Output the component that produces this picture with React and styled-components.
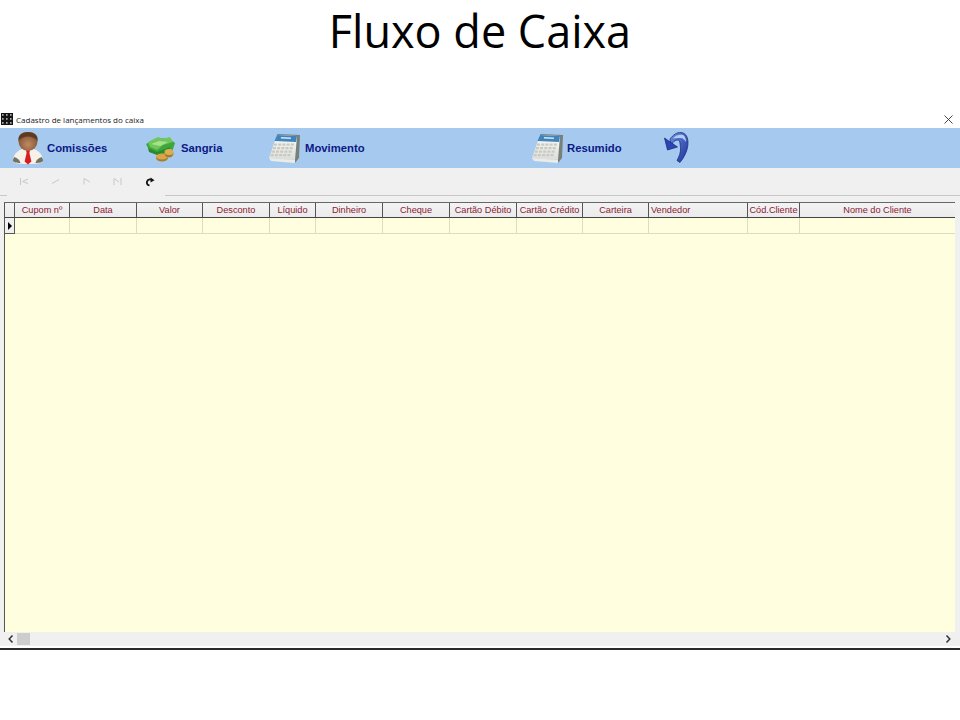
import React from 'react';
import styled, { createGlobalStyle } from 'styled-components';

const GlobalStyle = createGlobalStyle`
  html, body { margin: 0; padding: 0; background: #fff; }
  body { font-family: "Liberation Sans", Arial, sans-serif; }
`;

const Page = styled.div`
  width: 960px;
  height: 720px;
  background: #fff;
  overflow: hidden;
`;
const Heading = styled.h1`
  margin: 0;
  height: 110px;
  padding-top: 1px;
  box-sizing: border-box;
  text-align: center;
  font-family: "Open Sans", sans-serif;
  font-weight: 400;
  font-size: 45px;
  line-height: 60px;
  color: #000;
`;
const Win = styled.div`
  height: 540px;
  display: flex;
  flex-direction: column;
  border-bottom: 2px solid #2b2b2b;
  box-sizing: border-box;
`;
const TitleBar = styled.div`
  height: 18px;
  display: flex;
  align-items: center;
  padding: 0 7px 0 1px;
  background: #fff;
`;
const TitleText = styled.span`
  margin-left: 3px;
  font-family: "Open Sans", sans-serif;
  font-size: 8px;
  color: #222;
  flex: 1;
`;
const Ribbon = styled.div`
  height: 40px;
  background: #a6c9ef;
  display: flex;
  align-items: center;
  flex-shrink: 0;
`;
const RibbonButton = styled.div`
  width: ${p => p.$w}px;
  display: flex;
  align-items: center;
  gap: ${p => p.$gap || 2}px;
  padding-left: ${p => p.$pad || 0}px;
  box-sizing: border-box;
  font-size: 11.3px;
  font-weight: 700;
  color: #0d1a85;
`;
const NavBar = styled.div`
  height: 28px;
  background: #f0f0f0;
  border-bottom: 1px solid;
  border-image: linear-gradient(to right, #c8c8c8 8px, #f0f0f0 8px, #f0f0f0 166px, #c8c8c8 166px) 1;
  box-sizing: border-box;
  display: flex;
  align-items: center;
  padding-left: 8px;
  flex-shrink: 0;
`;
const NavButton = styled.div`
  width: 31.5px;
  height: 16px;
  display: flex;
  align-items: center;
  justify-content: center;
  color: ${p => (p.$on ? '#111' : '#c8c8c8')};
`;
const GridArea = styled.div`
  flex: 1;
  background: #f0f0f0;
  padding: 6px 5px 0 4px;
  display: flex;
  flex-direction: column;
  min-height: 0;
`;
const Sheet = styled.div`
  flex: 1;
  background: #ffffe0;
  border-left: 1px solid #555;
  border-top: 1px solid #666;
  min-height: 0;
`;
const Row = styled.div`
  display: grid;
  grid-template-columns: 10px 55px 67px 66px 67px 46px 67px 67px 67px 66px 66px 99px 52px 1fr;
  height: ${p => p.$h}px;
  box-sizing: border-box;
`;
const HeadCell = styled.div`
  background: linear-gradient(#f3f3f3, #ebebeb);
  border-right: 1px solid #555;
  border-bottom: 1px solid #444;
  color: #8b2035;
  font-size: 9.2px;
  line-height: 14px;
  text-align: ${p => (p.$left ? 'left' : 'center')};
  padding-left: ${p => (p.$left ? '2px' : '0')};
  white-space: nowrap;
  overflow: hidden;
  &:last-child { border-right: none; }
`;
const BodyCell = styled.div`
  border-right: 1px solid #dcdcc0;
  border-bottom: 1px solid #dcdcc0;
  &:last-child { border-right: none; }
`;
const Indicator = styled.div`
  background: #f0f0f0;
  border-right: 1px solid #555;
  border-bottom: 1px solid #555;
  display: flex;
  align-items: center;
  justify-content: center;
`;
const Arrow = styled.span`
  width: 0;
  height: 0;
  border-left: 4px solid #000;
  border-top: 4px solid transparent;
  border-bottom: 4px solid transparent;
`;
const ScrollBar = styled.div`
  height: 14px;
  margin-bottom: 2px;
  background: #f0f0f0;
  display: flex;
  align-items: center;
  justify-content: space-between;
  padding: 0 9px 0 8px;
  flex-shrink: 0;
`;
const Thumb = styled.div`
  width: 13px;
  height: 12px;
  margin-left: 3px;
  background: #cdcdcd;
`;
const ScrollLeft = styled.div`
  display: flex;
  align-items: center;
`;

const columns = [
  { label: 'Cupom nº' },
  { label: 'Data' },
  { label: 'Valor' },
  { label: 'Desconto' },
  { label: 'Líquido' },
  { label: 'Dinheiro' },
  { label: 'Cheque' },
  { label: 'Cartão Débito' },
  { label: 'Cartão Crédito' },
  { label: 'Carteira' },
  { label: 'Vendedor', left: true },
  { label: 'Cód.Cliente' },
  { label: 'Nome do Cliente' },
];

function AppIcon() {
  return (
    <svg width="12" height="12" viewBox="0 0 12 12">
      <rect width="12" height="12" fill="#151515" />
      {[1, 5, 9].map(x => [1, 5, 9].map(y => (
        <rect key={x + '-' + y} x={x} y={y} width="1.6" height="1.8" fill="#a8a8a8" />
      )))}
    </svg>
  );
}

function PersonIcon() {
  return (
    <svg width="32" height="34" viewBox="0 0 32 34">
      <defs>
        <radialGradient id="face" cx="0.5" cy="0.65" r="0.6">
          <stop offset="0" stopColor="#c08a63" />
          <stop offset="1" stopColor="#7d5233" />
        </radialGradient>
      </defs>
      <path d="M1 30c0-6 4-10 9-12h12c5 2 9 6 9 12 0 2-4 3-15 3S1 32 1 30z" fill="#f6f2ea" />
      <path d="M1 30c0-2 .5-3 1.5-4 2 1 5 2 6 6-4 0-7.500-1-7.500-2zM31 30c0-2-.5-3-1.500-4-2 1-5 2-6 6 4 0 7.500-1 7.500-2z" fill="#77725f" />
      <ellipse cx="16" cy="10.500" rx="9.500" ry="9.500" fill="url(#face)" />
      <path d="M6.500 10C5.500 4 10 1 16 1s10.500 3 9.500 9c-2-3-6-4.500-9.500-4.500S8.500 7 6.500 10z" fill="#5f3a20" />
      <path d="M14 19.500h4l-.6 2.500 2 8.500-3.400 3-3.400-3 2-8.500z" fill="#d81f1f" />
    </svg>
  );
}

function MoneyIcon() {
  return (
    <svg width="32" height="28" viewBox="0 0 32 28">
      <path d="M1 10 12 4l13 1 5 4-3 9-13 3-9-3z" fill="#3ea63a" />
      <path d="M3 8l10-5 5 2 7-2 3 5-10 3-6 5-7-3z" fill="#6fc65a" />
      <path d="M6 10l8-3 9 1-8 4z" fill="#a8e08c" />
      <path d="M3 14l9 4 13-5-2 5-11 3-8-3z" fill="#2b8a30" />
      <ellipse cx="17" cy="24" rx="6" ry="3.400" fill="#a87c2a" />
      <ellipse cx="17" cy="22.500" rx="6" ry="3" fill="#d8a548" />
      <ellipse cx="24" cy="19.500" rx="4.500" ry="4" fill="#a87c2a" />
      <ellipse cx="24" cy="18" rx="4.500" ry="3" fill="#dcae54" />
    </svg>
  );
}

function CalendarIcon({ id }) {
  return (
    <svg width="33" height="31" viewBox="0 0 33 31">
      <defs>
        <linearGradient id={id} x1="0" y1="0" x2="0" y2="1">
          <stop offset="0" stopColor="#fafaf8" />
          <stop offset="1" stopColor="#dcddd8" />
        </linearGradient>
      </defs>
      <path d="M9 1 32 2 31 25 27 30z" fill="#77807a" />
      <path d="M9 2 29 3 27 27 1 25z" fill={`url(#${id})`} />
      <path d="M9 2 29 3 28 9 6.500 8z" fill="#4183bd" />
      <path d="M13 4 23 4.500 22.800 6 12.800 5.600z" fill="#d6e7f4" />
      {[0, 1, 2, 3].map(r => [0, 1, 2, 3, 4].map(c => (
        <rect key={r + '-' + c} x={6 - r * 1.1 + c * 4.2} y={10.500 + r * 3.500} width="3" height="2.200" fill="#c8c9c2" />
      )))}
      <path d="M1 25 27 27 27 30 3 28z" fill="#ecece6" />
    </svg>
  );
}

function BackIcon() {
  return (
    <svg width="26" height="32" viewBox="0 0 26 32">
      <defs>
        <linearGradient id="back" x1="0" y1="0" x2="1" y2="1">
          <stop offset="0" stopColor="#6d92de" />
          <stop offset="1" stopColor="#1b2f9a" />
        </linearGradient>
      </defs>
      <path d="M6 7C9 3 13 0 17 .5c5 .5 7 5 7 10 0 8-4 15-8 20l-3-2c2-4 4-8 3.500-13C16 10 15.500 8 14 8c-2 0-4 1-5 2.500-.8 1-1.500 2-2 3.500z" fill="url(#back)" stroke="#16237c" strokeWidth="0.7" />
      <path d="M.5 6 3.500 18 13.500 15z" fill="#2a45b4" stroke="#16237c" strokeWidth="0.7" />
      <path d="M9 6c3-3 7-4 10-3 2 1 3 4 3 7-1.500-2-3-4-5.500-4-2.500 0-5 .5-7.500 0z" fill="#b2ccf3" />
    </svg>
  );
}

function NavGlyph({ d }) {
  return (
    <svg width="10" height="9" viewBox="0 0 10 9" fill="none" stroke="currentColor" strokeWidth="1">
      <path d={d} />
    </svg>
  );
}

function RefreshGlyph() {
  return (
    <svg width="10" height="10" viewBox="0 0 10 10" fill="none">
      <path d="M4.500 8.500C2.500 8 1.500 6.500 2 4.500 2.500 3 4 2 6 2.500" stroke="#111" strokeWidth="1.800" />
      <path d="M5.500 .5 9.500 3.200 5.500 5.500z" fill="#111" />
    </svg>
  );
}

function CloseGlyph() {
  return (
    <svg width="9" height="9" viewBox="0 0 9 9" stroke="#333" strokeWidth="0.9">
      <path d="M0.500 0.500 8.500 8.500M8.500 0.500 0.500 8.500" />
    </svg>
  );
}

function Chevron({ d }) {
  return (
    <svg width="6" height="8" viewBox="0 0 6 8" fill="none" stroke="#333" strokeWidth="1.500">
      <path d={d} />
    </svg>
  );
}

export default function App() {
  return (
    <Page>
      <GlobalStyle />
      <Heading>Fluxo de Caixa</Heading>
      <Win>
        <TitleBar>
          <AppIcon />
          <TitleText>Cadastro de lançamentos do caixa</TitleText>
          <CloseGlyph />
        </TitleBar>
        <Ribbon>
          <RibbonButton $w={132} $pad={12} $gap={3}><PersonIcon />Comissões</RibbonButton>
          <RibbonButton $w={124} $pad={13} $gap={4}><MoneyIcon />Sangria</RibbonButton>
          <RibbonButton $w={263} $pad={12} $gap={4}><CalendarIcon id="calA" />Movimento</RibbonButton>
          <RibbonButton $w={133} $pad={12} $gap={3}><CalendarIcon id="calB" />Resumido</RibbonButton>
          <RibbonButton $w={40} $pad={12}><BackIcon /></RibbonButton>
        </Ribbon>
        <NavBar>
          <NavButton><NavGlyph d="M1.500 1v7M9 2 3.500 4.500 9 6.500" /></NavButton>
          <NavButton><NavGlyph d="M9 2.500 2 6.500" /></NavButton>
          <NavButton><NavGlyph d="M2 1.500v6M2 1.500 8 5" /></NavButton>
          <NavButton><NavGlyph d="M1 8V1.500L6 5M8 1v7" /></NavButton>
          <NavButton $on><RefreshGlyph /></NavButton>
        </NavBar>
        <GridArea>
          <Sheet>
            <Row $h={15}>
              <HeadCell />
              {columns.map(c => <HeadCell key={c.label} $left={c.left}>{c.label}</HeadCell>)}
            </Row>
            <Row $h={16}>
              <Indicator><Arrow /></Indicator>
              {columns.map(c => <BodyCell key={c.label} />)}
            </Row>
          </Sheet>
        </GridArea>
        <ScrollBar>
          <ScrollLeft>
            <Chevron d="M4.500 0.500 1.200 4l3.300 3.500" />
            <Thumb />
          </ScrollLeft>
          <Chevron d="M1.500 0.500 4.800 4 1.500 7.500" />
        </ScrollBar>
      </Win>
    </Page>
  );
}
